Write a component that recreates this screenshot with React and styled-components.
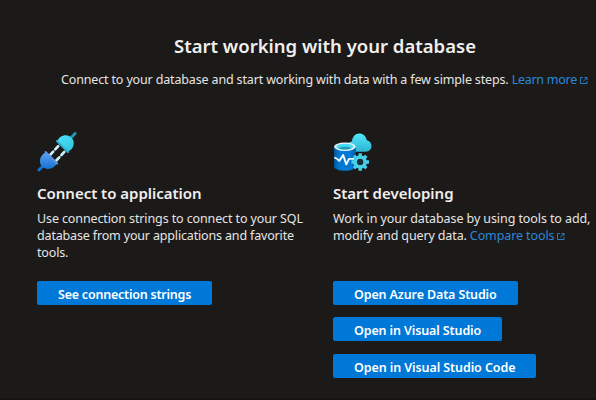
import React from "react";
import styled, { createGlobalStyle } from "styled-components";

const Global = createGlobalStyle`
  * { box-sizing: border-box; }
  html, body { margin: 0; background: #1b1a19; overflow: hidden; }
  body { font-family: "Noto Sans", "Open Sans", sans-serif; color: #e6e5e4; }
`;

const Page = styled.main`
  width: 596px;
  height: 400px;
  overflow: hidden;
  background: #1b1a19;
  border-bottom: 2px solid #161313;
`;

const Header = styled.header`
  display: flex;
  flex-direction: column;
  height: 132px;
  padding-top: 34px;
`;

const Title = styled.h1`
  margin: 0 0 0 174px;
  font-size: 18.5px;
  font-weight: 600;
  line-height: 24px;
  color: #f0efee;
  white-space: nowrap;
`;

const Text = styled.p`
  margin: 0;
  font-size: 12.5px;
  line-height: 17px;
  white-space: nowrap;
`;

const Intro = styled(Text)`
  margin: 13px 0 0 61px;
`;

const Line = styled.span`
  display: block;
  letter-spacing: ${(p) => p.$track}px;
`;

const Link = styled.a`
  color: #2b88d8;
  letter-spacing: ${(p) => p.$track}px;
  text-decoration: none;
`;

const Columns = styled.section`
  display: grid;
  grid-template-columns: 296px 263px;
  padding-left: 37px;
`;

const Card = styled.article`
  display: flex;
  flex-direction: column;
  align-items: flex-start;
`;

const Heading = styled.h2`
  margin: 10px 0 6px;
  font-size: 15px;
  font-weight: 600;
  line-height: 22px;
  letter-spacing: ${(p) => p.$track}px;
  color: #f0efee;
  white-space: nowrap;
`;

const Description = styled.div`
  height: 71px;
`;

const Actions = styled.div`
  display: grid;
  grid-template-rows: 36px 37px 24px;
  justify-items: start;
`;

const Button = styled.button`
  width: ${(p) => p.$width}px;
  height: 24px;
  padding: 2px 0 0 21px;
  border: 0;
  border-radius: 2px;
  background: #0078d7;
  color: #fff;
  font: 600 12.5px/24px "Noto Sans", "Open Sans", sans-serif;
  letter-spacing: ${(p) => p.$track}px;
  text-align: left;
  white-space: nowrap;
`;

const ExternalSvg = styled.svg`
  margin-left: 3px;
  vertical-align: -1px;
`;

const Icon = styled.svg`
  display: block;
`;

const External = () => (
  <ExternalSvg width="8" height="9" viewBox="0 0 8 9" fill="none" stroke="#2b88d8" strokeWidth="0.9">
    <path d="M3 1.5H.5v6h6.5V5M4.5 1.5H7V4M7 1.5 3.2 5.3" />
  </ExternalSvg>
);

const PlugIcon = () => (
  <Icon width="40" height="40" viewBox="0 0 40 40">
    <defs>
      <linearGradient id="cyan" x1="0" y1="0" x2="0.7" y2="1">
        <stop stopColor="#4be4fd" />
        <stop offset="1" stopColor="#36c5de" />
      </linearGradient>
      <linearGradient id="blue" x1="0" y1="0" x2="0" y2="1">
        <stop stopColor="#5ea0ef" />
        <stop offset="1" stopColor="#1573d4" />
      </linearGradient>
    </defs>
    <path d="m33.5 6.2 4.6-4.6" stroke="#2499b5" strokeWidth="2.8" strokeLinecap="round" />
    <path d="m1.9 38.1 4.9-4.9" stroke="#1573d4" strokeWidth="2.8" strokeLinecap="round" />
    <path d="m13.2 22.8 9-9.7M19.3 28.5l9-9.7" stroke="#d0f4ff" strokeWidth="2.6" strokeLinecap="round" strokeDasharray="4.4 3" />
    <path d="M20.3 9C22.8 3.2 29.8 1.2 34.2 5.5c4.8 4.7 2.3 11.8-3.4 14.2z" fill="url(#cyan)" />
    <path d="m20 9 11 11" stroke="#30b5cf" strokeWidth="2" strokeLinecap="round" />
    <path d="M8.8 20.2C3.2 22.8.8 30 5.1 34.5s12.1 2.5 14.8-3.2z" fill="url(#blue)" />
    <path d="m8.6 20 11.5 11.5" stroke="#5794e2" strokeWidth="2" strokeLinecap="round" />
  </Icon>
);

const teeth = [0, 45, 90, 135, 180, 225, 270, 315];

const DevelopIcon = () => (
  <Icon width="40" height="40" viewBox="0 0 40 40">
    <defs>
      <linearGradient id="drum">
        <stop stopColor="#005ba1" />
        <stop offset="0.25" stopColor="#0078d4" />
        <stop offset="0.75" stopColor="#0078d4" />
        <stop offset="1" stopColor="#005ba1" />
      </linearGradient>
      <linearGradient id="cloud" x1="0" y1="0" x2="0" y2="1">
        <stop stopColor="#50e6ff" />
        <stop offset="1" stopColor="#2eb4d2" />
      </linearGradient>
    </defs>
    <path d="M20 19.7c-3.2 0-5.5-2-5.5-5.2 0-2.7 1.8-4.7 4.5-5.2C19.6 4.3 22.4 1.5 26.2 1.5c3.9 0 6.7 2.6 7.6 6.7 2.9.5 4.7 3.1 4.7 5.8 0 3.3-2.5 5.7-5.7 5.7z" fill="url(#cloud)" />
    <path d="M1.1 14.8v19.6c0 2.4 4.8 4.4 10.8 4.4s10.8-2 10.8-4.4V14.8z" fill="url(#drum)" />
    <ellipse cx="11.9" cy="14.7" rx="10.8" ry="4.2" fill="#edf5fa" />
    <ellipse cx="11.9" cy="14.6" rx="8.7" ry="2.9" fill="#46dcf5" />
    <path d="M5.1 16c3.8-1.7 9.8-1.7 13.6 0-3.8 2-9.8 2-13.6 0" fill="#259cba" />
    <path d="M1.3 25.6c2.2.2 3 1.4 5 3.3l3.9-5.8 3.1 9.3 2.7-5.5h5" fill="none" stroke="#f1f8ff" strokeWidth="1.9" strokeLinejoin="round" />
    <g transform="translate(27.2 30)">
      {teeth.map((angle) => (
        <rect key={angle} x="-1.7" y="-8.8" width="3.4" height="4" rx=".5" fill="#47cfe8" transform={`rotate(${angle})`} />
      ))}
      <circle r="4.9" fill="none" stroke="#47cfe8" strokeWidth="3.8" />
      <path d="M-3 0a3 3 0 0 1 6 0 3 3 0 0 1-6 0" fill="#1b2b38" />
    </g>
  </Icon>
);

export default function App() {
  return (
    <>
      <Global />
      <Page>
        <Header>
          <Title>Start working with your database</Title>
          <Intro>
            <Line $track={-0.152}>
              Connect to your database and start working with data with a few simple steps.{" "}
              <Link $track={-0.27}>Learn more<External /></Link>
            </Line>
          </Intro>
        </Header>
        <Columns>
          <Card>
            <PlugIcon />
            <Heading $track={-0.02}>Connect to application</Heading>
            <Description>
              <Text>
                <Line $track={-0.115}>Use connection strings to connect to your SQL</Line>
                <Line $track={-0.16}>database from your applications and favorite</Line>
                <Line $track={-0.16}>tools.</Line>
              </Text>
            </Description>
            <Actions>
              <Button $width={175} $track={-0.22}>See connection strings</Button>
            </Actions>
          </Card>
          <Card>
            <DevelopIcon />
            <Heading $track={0}>Start developing</Heading>
            <Description>
              <Text>
                <Line $track={-0.09}>Work in your database by using tools to add,</Line>
                <Line $track={-0.13}>
                  modify and query data. <Link $track={-0.1}>Compare tools<External /></Link>
                </Line>
              </Text>
            </Description>
            <Actions>
              <Button $width={185} $track={-0.13}>Open Azure Data Studio</Button>
              <Button $width={169} $track={-0.12}>Open in Visual Studio</Button>
              <Button $width={203} $track={-0.09}>Open in Visual Studio Code</Button>
            </Actions>
          </Card>
        </Columns>
      </Page>
    </>
  );
}
